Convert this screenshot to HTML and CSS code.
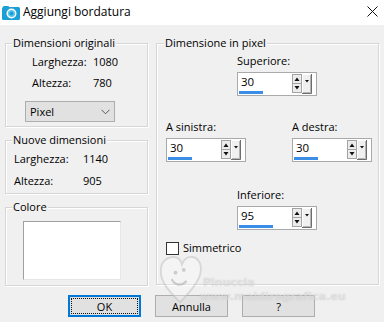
FILE: index.html
```html
<!DOCTYPE html>
<html lang="it">
<head>
<meta charset="utf-8">
<title>Aggiungi bordatura</title>
<link rel="stylesheet" href="styles.css">
</head>
<body>
<div class="window">
  <header class="titlebar">
    <svg class="appicon" width="18" height="14" viewBox="0 0 18 14">
      <rect x="0" y="1" width="18" height="13" rx="1.5" fill="#1c9fd6"/>
      <rect x="1" y="0" width="6" height="3" rx="1" fill="#1c9fd6"/>
      <circle cx="9.5" cy="7.5" r="4.3" fill="#5cc6ee" stroke="#ffffff" stroke-width="1.4"/>
      <circle cx="9.5" cy="7.5" r="2" fill="#1c9fd6"/>
    </svg>
    <span class="title">Aggiungi bordatura</span>
    <svg class="close" width="11" height="11" viewBox="0 0 11 11">
      <path d="M0.5 0.5 L10.5 10.5 M10.5 0.5 L0.5 10.5" stroke="#111" stroke-width="1" fill="none"/>
    </svg>
  </header>

  <main class="dialog">
    <div class="left">
      <section class="group g-orig">
        <div class="legend">Dimensioni originali</div>
        <div class="info info-orig">
          <span>Larghezza:</span><span>1080</span>
          <span>Altezza:</span><span>780</span>
        </div>
        <div class="select">
          <span>Pixel</span>
          <svg width="9" height="6" viewBox="0 0 9 6"><path d="M0.5 0.8 L4.5 4.8 L8.5 0.8" stroke="#555" stroke-width="1" fill="none"/></svg>
        </div>
      </section>

      <section class="group g-new">
        <div class="legend">Nuove dimensioni</div>
        <div class="info info-new">
          <span>Larghezza:</span><span>1140</span>
          <span>Altezza:</span><span>905</span>
        </div>
      </section>

      <section class="group g-color">
        <div class="legend">Colore</div>
        <div class="swatch"></div>
      </section>
    </div>

    <section class="group g-pixel">
      <div class="legend">Dimensione in pixel</div>

      <div class="field f-top">
        <label>Superiore:</label>
        <div class="spin">
          <div class="edit"><span class="val">30</span><span class="bar b30"></span></div>
          <svg class="arrows" width="21" height="20" viewBox="0 0 21 20">
            <rect x="0.5" y="0.5" width="9" height="9" fill="#ececec" stroke="#a3a3a3"/>
            <rect x="0.5" y="9.5" width="9" height="9" fill="#ececec" stroke="#a3a3a3"/>
            <path d="M2.5 7 L7.5 7 L5 3.5 Z" fill="#111"/>
            <path d="M2.5 12 L7.5 12 L5 15.5 Z" fill="#111"/>
            <rect x="10" y="0" width="10" height="20" fill="#f0f0f0"/>
            <path d="M10.5 19.5 L10.5 0.5 L19.5 0.5" stroke="#ffffff" fill="none"/>
            <path d="M10 19.5 L19.5 19.5 L19.5 0" stroke="#6d6d6d" fill="none"/>
            <path d="M11 18.5 L18.5 18.5 L18.5 1" stroke="#b4b4b4" fill="none"/>
            <path d="M13 6 L17 6 L15 8.5 Z" fill="#111"/>
          </svg>
        </div>
      </div>

      <div class="row">
        <div class="field">
          <label>A sinistra:</label>
          <div class="spin">
            <div class="edit"><span class="val">30</span><span class="bar b30"></span></div>
            <svg class="arrows" width="21" height="20" viewBox="0 0 21 20">
              <rect x="0.5" y="0.5" width="9" height="9" fill="#ececec" stroke="#a3a3a3"/>
              <rect x="0.5" y="9.5" width="9" height="9" fill="#ececec" stroke="#a3a3a3"/>
              <path d="M2.5 7 L7.5 7 L5 3.5 Z" fill="#111"/>
              <path d="M2.5 12 L7.5 12 L5 15.5 Z" fill="#111"/>
              <rect x="10" y="0" width="10" height="20" fill="#f0f0f0"/>
              <path d="M10.5 19.5 L10.5 0.5 L19.5 0.5" stroke="#ffffff" fill="none"/>
              <path d="M10 19.5 L19.5 19.5 L19.5 0" stroke="#6d6d6d" fill="none"/>
              <path d="M11 18.5 L18.5 18.5 L18.5 1" stroke="#b4b4b4" fill="none"/>
              <path d="M13 6 L17 6 L15 8.5 Z" fill="#111"/>
            </svg>
          </div>
        </div>
        <div class="field">
          <label>A destra:</label>
          <div class="spin">
            <div class="edit"><span class="val">30</span><span class="bar b30"></span></div>
            <svg class="arrows" width="21" height="20" viewBox="0 0 21 20">
              <rect x="0.5" y="0.5" width="9" height="9" fill="#ececec" stroke="#a3a3a3"/>
              <rect x="0.5" y="9.5" width="9" height="9" fill="#ececec" stroke="#a3a3a3"/>
              <path d="M2.5 7 L7.5 7 L5 3.5 Z" fill="#111"/>
              <path d="M2.5 12 L7.5 12 L5 15.5 Z" fill="#111"/>
              <rect x="10" y="0" width="10" height="20" fill="#f0f0f0"/>
              <path d="M10.5 19.5 L10.5 0.5 L19.5 0.5" stroke="#ffffff" fill="none"/>
              <path d="M10 19.5 L19.5 19.5 L19.5 0" stroke="#6d6d6d" fill="none"/>
              <path d="M11 18.5 L18.5 18.5 L18.5 1" stroke="#b4b4b4" fill="none"/>
              <path d="M13 6 L17 6 L15 8.5 Z" fill="#111"/>
            </svg>
          </div>
        </div>
      </div>

      <div class="field f-bottom">
        <label>Inferiore:</label>
        <div class="spin">
          <div class="edit"><span class="val">95</span><span class="bar b95"></span></div>
          <svg class="arrows" width="21" height="20" viewBox="0 0 21 20">
            <rect x="0.5" y="0.5" width="9" height="9" fill="#ececec" stroke="#a3a3a3"/>
            <rect x="0.5" y="9.5" width="9" height="9" fill="#ececec" stroke="#a3a3a3"/>
            <path d="M2.5 7 L7.5 7 L5 3.5 Z" fill="#111"/>
            <path d="M2.5 12 L7.5 12 L5 15.5 Z" fill="#111"/>
            <rect x="10" y="0" width="10" height="20" fill="#f0f0f0"/>
            <path d="M10.5 19.5 L10.5 0.5 L19.5 0.5" stroke="#ffffff" fill="none"/>
            <path d="M10 19.5 L19.5 19.5 L19.5 0" stroke="#6d6d6d" fill="none"/>
            <path d="M11 18.5 L18.5 18.5 L18.5 1" stroke="#b4b4b4" fill="none"/>
            <path d="M13 6 L17 6 L15 8.5 Z" fill="#111"/>
          </svg>
        </div>
      </div>

      <div class="check">
        <span class="box"></span>
        <span>Simmetrico</span>
      </div>
    </section>

    <div class="buttons">
      <button class="btn default"><span class="focus">OK</span></button>
      <button class="btn">Annulla</button>
      <button class="btn">?</button>
    </div>
  </main>

  <div class="watermark" aria-hidden="true">
    <svg class="heart" width="46" height="56" viewBox="0 0 50 56">
      <path d="M24 52 C14 42 3 32 3 18 C3 8 10 3 17 3 C22 3 25 7 26 11 C28 5 33 2 38 3 C45 5 48 12 46 21 C44 31 34 42 24 52 Z" fill="rgba(255,255,255,0.3)" stroke="rgba(190,190,190,0.5)" stroke-width="2"/>
      <path d="M15 27 C18 34 26 35 31 29" stroke="rgba(170,170,170,0.55)" stroke-width="2.5" fill="none"/>
      <circle cx="19" cy="20" r="2" fill="rgba(170,170,170,0.55)"/>
      <circle cx="28" cy="17" r="2" fill="rgba(170,170,170,0.55)"/>
    </svg>
    <span class="wm1">Pinuccia</span>
    <span class="wm2">www.maidiregrafica.eu</span>
  </div>
</div>
</body>
</html>
```

FILE: styles.css
```css
* { box-sizing: border-box; }

html, body {
  margin: 0;
  padding: 0;
}

body {
  width: 384px;
  height: 322px;
  overflow: hidden;
  background: #f0f0f0;
  font-family: "Open Sans", "Noto Sans", sans-serif;
  font-size: 11px;
  color: #000;
}

.window {
  position: relative;
  width: 384px;
  height: 322px;
}

.titlebar {
  height: 25px;
  background: #ffffff;
  display: flex;
  align-items: center;
  padding-left: 2px;
}

.appicon {
  margin-right: 3px;
  margin-top: 1px;
}

.title {
  font-size: 12px;
  flex: 1;
  margin-top: -2px;
}

.close {
  margin-right: 6px;
  margin-top: -3px;
}

.dialog {
  display: grid;
  grid-template-columns: 143px 223px;
  column-gap: 8px;
  padding: 18px 0 0 5px;
}

.left {
  display: flex;
  flex-direction: column;
  gap: 12px;
}

.group {
  border: 1px solid #d6d6d6;
  box-shadow: inset 1px 1px 0 #ffffff, 1px 1px 0 #ffffff;
}

.legend {
  display: table;
  margin: -8px 0 0 6px;
  padding: 0 1px;
  line-height: 14px;
  background: #f0f0f0;
}

.g-orig { height: 84px; }
.g-new { height: 54px; margin-top: 1px; }
.g-color { height: 79px; margin-top: 1px; }
.g-pixel { height: 242px; }

.info {
  display: grid;
  line-height: 16px;
  margin-top: 4px;
}

.info-orig {
  grid-template-columns: 61px auto;
  row-gap: 5px;
  padding-left: 26px;
}

.info-new {
  grid-template-columns: 69px auto;
  row-gap: 6px;
  padding-left: 8px;
}

.select {
  margin: 10px 0 0 19px;
  width: 90px;
  height: 21px;
  background: #e1e1e1;
  border: 1px solid #adadad;
  display: flex;
  align-items: center;
  justify-content: space-between;
  padding: 0 4px 0 4px;
}

.select svg { margin-top: 1px; }

.swatch {
  margin: 7px 0 0 17px;
  width: 98px;
  height: 59px;
  background: #ffffff;
  border: 1px solid;
  border-color: #a0a0a0 #e6e6e6 #e6e6e6 #a0a0a0;
}

/* right panel */
.g-pixel .legend { margin-left: 7px; }

.field {
  display: flex;
  flex-direction: column;
  gap: 3px;
  width: 80px;
}

.field label {
  line-height: 16px;
  display: block;
}

.f-top {
  margin: 3px 0 0 80px;
}

.row {
  display: flex;
  gap: 46px;
  margin: 23px 0 0 9px;
}

.f-bottom {
  margin: 25px 0 0 80px;
}

.spin {
  width: 80px;
  height: 24px;
  background: #ffffff;
  border: 1px solid #a9a9a9;
  display: flex;
  align-items: flex-start;
}

.edit {
  flex: 1;
  display: flex;
  flex-direction: column;
  padding: 1px 0 0 1px;
}

.val {
  line-height: 16px;
  padding-left: 2px;
  font-size: 11.5px;
}

.bar {
  display: block;
  height: 3px;
  margin-top: 1px;
  background: #3b8ee5;
}

.b30 { width: 24px; }
.b95 { width: 34px; }

.arrows {
  margin: 1px 3px 0 0;
  flex: none;
}

.check {
  display: flex;
  align-items: center;
  gap: 4px;
  margin: 11px 0 0 9px;
  line-height: 14px;
}

.box {
  width: 13px;
  height: 13px;
  background: #ffffff;
  border: 1px solid #333333;
}

.buttons {
  grid-column: 1 / -1;
  display: flex;
  gap: 14px;
  margin-top: 9px;
  padding-left: 63px;
}

.btn {
  width: 73px;
  height: 22px;
  padding: 0;
  margin: 0;
  font: inherit;
  color: #000;
  background: #e1e1e1;
  border: 1px solid #adadad;
  display: flex;
  align-items: center;
  justify-content: center;
}

.btn.default {
  border: 2px solid #0078d7;
  padding: 1px;
}

.focus {
  flex: 1;
  align-self: stretch;
  display: flex;
  align-items: center;
  justify-content: center;
  outline: 1px dotted #111;
  outline-offset: -1px;
}

/* watermark overlay */
.watermark {
  position: absolute;
  left: 158px;
  top: 252px;
  width: 180px;
  height: 60px;
  pointer-events: none;
}

.heart {
  position: absolute;
  left: 0;
  top: 0;
}

.wm1, .wm2 {
  position: absolute;
  font-family: "DejaVu Sans", sans-serif;
  font-weight: bold;
  color: rgba(255, 255, 255, 0.45);
  text-shadow: 0 0 1px rgba(150, 150, 150, 0.5);
  line-height: 13px;
}

.wm1 {
  left: 45px;
  top: 24px;
  font-size: 11px;
}

.wm2 {
  left: 42px;
  top: 38px;
  font-size: 11px;
  letter-spacing: 0.1px;
}
```
